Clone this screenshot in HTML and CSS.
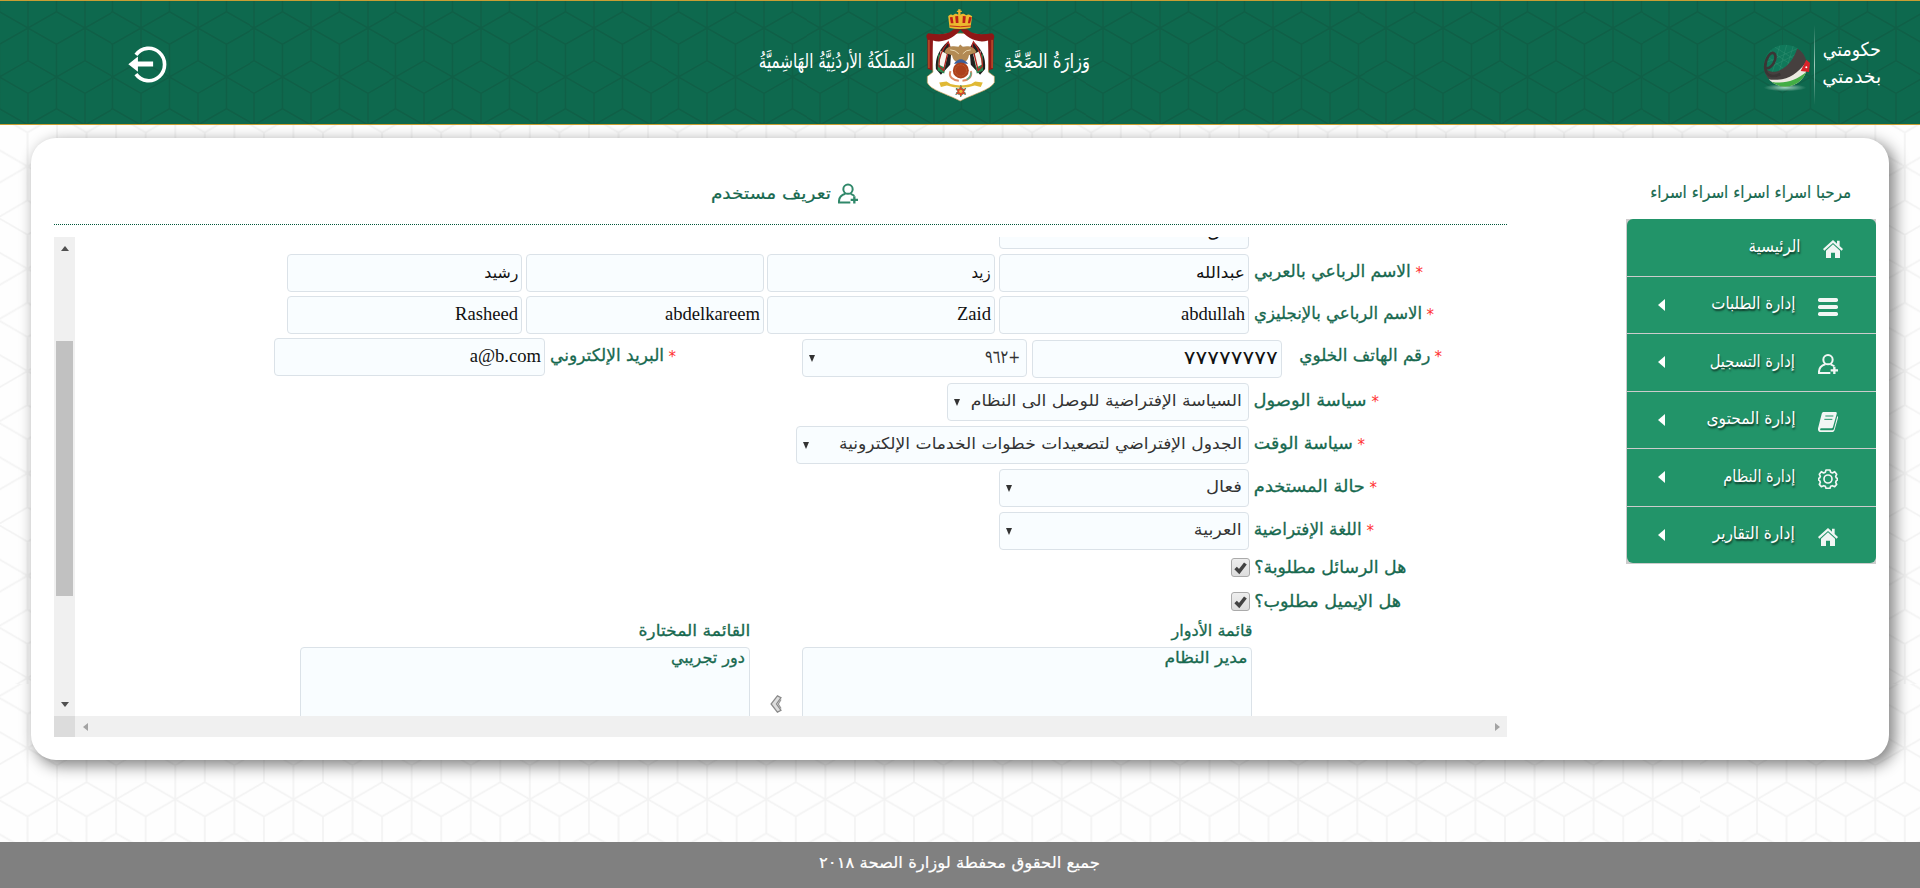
FILE: index.html
```html
<!DOCTYPE html>
<html lang="ar" dir="rtl">
<head>
<meta charset="utf-8">
<title>تعريف مستخدم</title>
<link rel="stylesheet" href="styles.css">
</head>
<body>
<svg class="defs" width="0" height="0">
  <symbol id="i-home" viewBox="0 0 60 54"><path fill="currentColor" d="M30 0 0 27l4 5L30 9l26 23 4-5-10-9V2h-8v9zM30 13 9 32v22h15V38h12v16h15V32z"/></symbol>
  <symbol id="i-menu" viewBox="0 0 60 54"><g fill="currentColor"><rect width="60" height="12" rx="5"/><rect y="21" width="60" height="12" rx="5"/><rect y="42" width="60" height="12" rx="5"/></g></symbol>
  <symbol id="i-user" viewBox="0 0 60 60"><g fill="none" stroke="currentColor" stroke-width="6"><ellipse cx="30" cy="17" rx="14" ry="14"/><path d="M22 31C8 35 2 42 3 57h34M38 31c5 2 9 4 11 6"/><path stroke-width="7" d="M38 49h22M49 38v22"/></g></symbol>
  <symbol id="i-book" viewBox="0 0 60 60"><path fill="currentColor" d="M18 0h34c4 0 5 2 4 6L45 45c-1 3-3 4-6 4H11c-6 0-6 6-1 6h31c4 0 6-1 7-5L58 12c4 3 2 6 1 9L50 53c-1 5-4 7-9 7H9c-8 0-11-7-8-14L11 6c1-4 3-6 7-6z"/><path stroke="#229469" stroke-width="3" d="M22 12h24M19 22h24"/></symbol>
  <symbol id="i-gear" viewBox="0 0 60 60"><g fill="none" stroke="currentColor"><circle cx="30" cy="30" r="12" stroke-width="5"/><path stroke-width="5" stroke-linejoin="round" d="M24 3h12l2 7 5 2 7-4 6 8-3 6 2 5 3 1v5l-3 2-2 5 3 6-6 7-7-3-5 2-2 6H24l-2-6-5-2-7 3-6-7 3-6-2-5-3-2v-5l3-1 2-5-3-6 6-8 7 4 5-2z"/></g></symbol>
</svg>

<header class="top">
  <div class="egov">
    <div class="egov-text">
      <span class="fit" data-w="58"><span>حكومتي</span></span>
      <span class="fit" data-w="59"><span>بخدمتي</span></span>
    </div>
    <i class="egov-line"></i>
    <svg class="ball" viewBox="70 130 147 147">
      <defs>
        <radialGradient id="sh"><stop offset="0" stop-color="#dfe" stop-opacity=".7"/><stop offset="1" stop-color="#dfe" stop-opacity="0"/></radialGradient>
        <clipPath id="bc"><ellipse cx="140" cy="198" rx="65" ry="63"/></clipPath>
      </defs>
      <ellipse cx="139" cy="264" rx="64" ry="11" fill="url(#sh)"/>
      <g clip-path="url(#bc)">
        <rect x="70" y="130" width="150" height="140" fill="#10785a"/>
        <g stroke="#3f9b7b" stroke-width="1" fill="none"><path d="M90 150l90 60M105 140l80 50M85 170l80 60M125 132l-25 90M145 132l-25 90M165 135l-25 85M80 190l100-45M90 205l100-50"/></g>
        <path d="M70 190C88 240 155 215 176 146l40 25v100H72z" fill="#46403f"/>
        <path d="M85 238c50 10 88-10 115-48l10 20v65H90z" fill="#eceae2"/>
        <path d="M97 246c40 8 75-2 110-32v60H97z" fill="#43ad45"/>
      </g>
      <path d="M186 214l17-34 11 10-3 27z" fill="#d8232a"/><circle cx="203" cy="203" r="3" fill="#fff"/>
      <path d="M80 205c20 5 36-28 28-42-10-14-30 15-28 42 3 32 32 25 45 18" fill="none" stroke="#3a3535" stroke-width="8"/>
    </svg>
  </div>
  <div class="brand">
    <span class="fit callig" data-w="86"><span>وَزارَةُ الصِّحَّةِ</span></span>
    <svg class="crest" viewBox="555 25 212 280">
      <path d="M572 108Q660 88 750 108L745 215 763 228V246C750 270 700 280 660 302 620 280 570 270 561 246V228L578 215z" fill="#fff" stroke="#c89b55" stroke-width="2"/>
      <path d="M640 86h42c15 18 45 16 74 12 8 5 8 12 5 17l-2 90-13 5-2-90c-35 10-66-10-83-33-17 23-50 43-83 33l-2 90-14-5-1-90c-5-8-2-14 3-17 30 4 61 6 76-12z" fill="#8f1716"/>
      <path d="M566 118v85M756 118v85" stroke="#cf6b35" stroke-width="3"/>
      <path d="M628 82l-4-35c5-6 10-7 14-3 5-6 12-6 16-2v-8h-4v-4h4v-4h7v4h4v4h-4v8c5-4 12-4 17 2 5-4 10-3 18 3l-5 35q-32 7-63 0z" fill="#edb82f"/>
      <path d="M632 68l-3-18 8-1 3 19zM647 67l-2-20 9-1 1 21zM667 67l1-21 9 1-2 20zM683 68l4-19 8 1-5 18z" fill="#be2016"/>
      <path d="M629 76q32 5 64 0" stroke="#c23017" stroke-width="3" fill="none"/>
      <path d="M622 124c-24 20-38 46-35 82l15 17 28-30 4-50zM700 124c25 20 38 46 35 82l-15 17-28-30-4-50z" fill="#20201f"/>
      <path d="M594 160l26 15-8 44-20-8zM728 160l-26 15 8 44 19-8z" fill="#2b8a51"/>
      <path d="M601 150l22 12-10 39-18-9zM721 150l-22 12 10 39 17-9z" fill="#f8f5ee"/>
      <path d="M624 124l4 10-18 76-14-13c-1-28 9-50 28-73zM700 124l-4 10 18 76 13-13c1-28-9-50-27-73z" fill="none" stroke="#b22521" stroke-width="4"/>
      <path d="M613 155c4-18 27-20 42-16l5-7 8 7c15-5 36 0 41 16-7 5-17 4-23 10-2 14-9 21-24 22-16-1-24-8-26-22-6-5-18-4-23-10z" fill="#b38a53"/>
      <path d="M630 148q16 0 26 12M692 148q-15 0-24 12" stroke="#ead7ae" stroke-width="3" fill="none"/>
      <path d="M631 212c-8 18 9 28 25 29M692 212c6 18-9 28-25 29" stroke="#df8b65" stroke-width="6" fill="none"/>
      <path d="M692 216c2 10-5 17-12 22" stroke="#62aa85" stroke-width="5" fill="none"/>
      <path d="M641 190q20-28 43 0z" fill="#3e5f99"/>
      <circle cx="662" cy="210" r="24" fill="#ad411b"/><circle cx="662" cy="210" r="17" fill="none" stroke="#cc7440" stroke-width="2" stroke-dasharray="3 2"/>
      <path d="M597 246l22-3 12 8q30 9 62 0l12-8 23 3-6 14-18-5q-41 14-84 0l-18 5z" fill="#e0b935"/>
      <path d="M662 255l5 10 11-1-6 9 6 9-11 0-5 8-5-8-11 0 6-9-6-9 11 1z" fill="#d24a2b" stroke="#369070" stroke-width="3" stroke-dasharray="4 5"/>
      <circle cx="662" cy="273" r="5" fill="#e9bd39"/>
    </svg>
    <span class="fit callig" data-w="156"><span>المَملَكَةُ الأردُنِيَّةُ الهَاشِميَّةُ</span></span>
  </div>
  <svg class="logout" viewBox="84 136 118 112"><path d="M108 163A48 49 0 1 1 108 221" fill="none" stroke="#fff" stroke-width="11"/><path d="M85 191l29-23v15h46v15h-46v16z" fill="#fff"/></svg>
</header>

<main class="card">
  <aside class="side">
    <div class="hello"><span class="fit" data-w="201"><span>مرحبا اسراء اسراء اسراء اسراء</span></span></div>
    <nav class="menu">
      <a class="home"><svg><use href="#i-home"/></svg><span class="fit" data-w="52"><span>الرئيسية</span></span></a>
      <a><svg><use href="#i-menu"/></svg><span class="fit" data-w="84"><span>إدارة الطلبات</span></span><i></i></a>
      <a><svg><use href="#i-user"/></svg><span class="fit" data-w="85"><span>إدارة التسجيل</span></span><i></i></a>
      <a><svg><use href="#i-book"/></svg><span class="fit" data-w="89"><span>إدارة المحتوى</span></span><i></i></a>
      <a><svg><use href="#i-gear"/></svg><span class="fit" data-w="72"><span>إدارة النظام</span></span><i></i></a>
      <a><svg><use href="#i-home"/></svg><span class="fit" data-w="82"><span>إدارة التقارير</span></span><i></i></a>
    </nav>
  </aside>
  <section class="content">
    <h1><svg><use href="#i-user"/></svg><span class="fit" data-w="120"><span>تعريف مستخدم</span></span></h1>
    <div class="scroller">
      <div class="form">
        <div class="row cut">
          <span class="box w250">ى</span>
        </div>
        <div class="row r-ar">
          <b>*</b><label class="fit" data-w="157"><span>الاسم الرباعي بالعربي</span></label>
          <span class="box w250"><span class="fit" data-w="49"><span>عبدالله</span></span></span>
          <span class="box w228"><span class="fit" data-w="19"><span>زيد</span></span></span>
          <span class="box w238"></span>
          <span class="box w235"><span class="fit" data-w="34"><span>رشيد</span></span></span>
        </div>
        <div class="row r-en">
          <b>*</b><label class="fit" data-w="168"><span>الاسم الرباعي بالإنجليزي</span></label>
          <span class="box w250">abdullah</span>
          <span class="box w228">Zaid</span>
          <span class="box w238">abdelkareem</span>
          <span class="box w235">Rasheed</span>
        </div>
        <div class="row r-phone">
          <b>*</b><label class="fit" data-w="131"><span>رقم الهاتف الخلوي</span></label>
          <span class="box w250 phone"><span class="fit" data-w="94"><span>٧٧٧٧٧٧٧٧</span></span></span>
          <span class="box pick code"><span class="fit" data-w="35"><span>+٩٦٢</span></span><i></i></span>
          <b class="mail">*</b><label class="fit" data-w="114"><span>البريد الإلكتروني</span></label>
          <span class="box w271">a@b.com</span>
        </div>
        <div class="row r-access">
          <b>*</b><label class="fit" data-w="113"><span>سياسة الوصول</span></label>
          <span class="box pick w302"><span class="fit" data-w="271"><span>السياسة الإفتراضية للوصل الى النظام</span></span><i></i></span>
        </div>
        <div class="row r-time">
          <b>*</b><label class="fit" data-w="99"><span>سياسة الوقت</span></label>
          <span class="box pick w453"><span class="fit" data-w="403"><span>الجدول الإفتراضي لتصعيدات خطوات الخدمات الإلكترونية</span></span><i></i></span>
        </div>
        <div class="row r-state">
          <b>*</b><label class="fit" data-w="111"><span>حالة المستخدم</span></label>
          <span class="box pick w250"><span class="fit" data-w="36"><span>فعال</span></span><i></i></span>
        </div>
        <div class="row r-lang">
          <b>*</b><label class="fit" data-w="108"><span>اللغة الإفتراضية</span></label>
          <span class="box pick w250"><span class="fit" data-w="48"><span>العربية</span></span><i></i></span>
        </div>
        <div class="row check r-sms">
          <label class="fit" data-w="152"><span>هل الرسائل مطلوبة؟</span></label>
          <span class="tick"><svg viewBox="0 0 19 19"><path d="M4 10l4 4 7-9" fill="none" stroke="#424242" stroke-width="3.900"/></svg></span>
        </div>
        <div class="row check r-email">
          <label class="fit" data-w="147"><span>هل الإيميل مطلوب؟</span></label>
          <span class="tick"><svg viewBox="0 0 19 19"><path d="M4 10l4 4 7-9" fill="none" stroke="#424242" stroke-width="3.900"/></svg></span>
        </div>
        <div class="lists">
          <div class="list"><label class="fit" data-w="81"><span>قائمة الأدوار</span></label><div class="options"><span class="fit" data-w="83"><span>مدير النظام</span></span></div></div>
          <svg class="move" viewBox="0 0 16 20"><path d="M9 1 2 10l7 9 4-2-5-7 5-7z" fill="#ddd" stroke="#8a8a8a" stroke-width="1.400"/><path d="M13 5l-3 5 3 5" fill="none" stroke="#999" stroke-width="1.500"/></svg>
          <div class="list"><label class="fit" data-w="112"><span>القائمة المختارة</span></label><div class="options"><span class="fit" data-w="74"><span>دور تجريبي</span></span></div></div>
        </div>
      </div>
      <div class="vbar"><i class="up"></i><span class="thumb"></span><i class="down"></i></div>
      <div class="hbar"><i class="right"></i><i class="left"></i></div>
      <div class="corner"></div>
    </div>
  </section>
</main>

<footer class="foot"><span class="fit" data-w="281"><span>جميع الحقوق محفطة لوزارة الصحة ٢٠١٨</span></span></footer>
<script src="fit.js"></script>
</body>
</html>
```
FILE: fit.js
```js
// Condenses or widens each phrase to its column width.
document.querySelectorAll('.fit').forEach(function (el) {
  var inner = el.firstElementChild;
  var w = Number(el.dataset.w);
  var natural = inner.getBoundingClientRect().width;
  el.style.width = w + 'px';
  inner.style.transform = 'scaleX(' + w / natural + ')';
});
```
FILE: styles.css
```css
* { box-sizing: border-box; }
body {
  margin: 0;
  height: 888px;
  overflow: hidden;
  display: flex;
  flex-direction: column;
  font-family: "DejaVu Sans", sans-serif;
  font-size: 17px;
  color: #17694f;
  background: #fefefe url("data:image/svg+xml,%3Csvg xmlns='http://www.w3.org/2000/svg' width='1700' height='684'%3E%3Cdefs%3E%3Cpattern id='q' x='27.5' y='64.15' width='59.1' height='102.3' patternUnits='userSpaceOnUse'%3E%3Cpath d='M0 0L29.55 17.05L59.1 0M0 0L29.55 -17.05L59.1 0M29.55 17.05V51.15M0 0V34.1M59.1 0V34.1M0 34.1L29.55 51.15L59.1 34.1M0 68.2L29.55 51.15L59.1 68.2M0 68.2V102.3M59.1 68.2V102.3M29.55 51.15V85.25M0 102.3L29.55 85.25L59.1 102.3' fill='none' stroke='%23f3f3f3' stroke-width='1.7'/%3E%3C/pattern%3E%3C/defs%3E%3Crect width='1700' height='684' fill='url(%23q)'/%3E%3C/svg%3E") 0 0 repeat;
}
.defs { position: absolute; }
.fit { display: inline-block; white-space: nowrap; flex: none; }
.fit > span { display: inline-block; transform-origin: 100% 50%; }

.top {
  height: 125px;
  flex: none;
  border: solid #c99e33;
  border-width: 1px 0;
  display: flex;
  align-items: flex-start;
  padding: 0 39px 0 128px;
  color: #fff;
  background: #0e694e url("data:image/svg+xml,%3Csvg xmlns='http://www.w3.org/2000/svg' width='56.6' height='97.3'%3E%3Cpath d='M0 0L28.3 -16.200L56.6 0M0 0L28.3 16.200L56.6 0M28.3 16.200V48.600M0 0V32.400M56.6 0V32.400M28.3 48.600L0 32.400M28.3 48.600L56.6 32.400M28.3 48.600L0 64.900M28.3 48.600L56.6 64.900M0 64.900V97.300M56.6 64.900V97.300M28.3 48.600V81.1M0 97.300L28.3 81.1L56.6 97.300' fill='none' stroke='%230f6047' stroke-width='1.6'/%3E%3C/svg%3E") 28.1px 27px;
}
.egov { display: flex; margin: 24px 0 0 672px; height: 82px; }
.egov-text { display: flex; flex-direction: column; padding-top: 11px; font-size: 19px; line-height: 27px; }
.egov-line { width: 1px; height: 80px; margin: 0 7px 0 3px; background: linear-gradient(transparent, #9fc9ba 50%, transparent); }
.ball { width: 49px; height: 49px; margin-top: 18px; }
.brand { display: flex; align-items: flex-start; margin-left: auto; }
.crest { width: 71px; height: 93px; margin: 8px 8px 0 10px; }
.callig { font-size: 20px; line-height: 30px; margin-top: 45px; }
.logout { width: 39px; height: 37px; margin-top: 45px; }

.card {
  flex: none;
  height: 622px;
  margin: 13px 31px 0;
  border-radius: 25px;
  background: #fff;
  box-shadow: 5px 5px 15px 1px rgba(0,0,0,.48);
  display: flex;
  justify-content: space-between;
  padding: 0 13px 0 23px;
}
.side { width: 250px; }
.hello { padding: 41px 25px 0 0; height: 81px; line-height: 26px; -webkit-text-stroke: .2px; }
.menu { border: 1px solid #ccc; background: #ccc; height: 345px; display: grid; grid-template-rows: repeat(6, 1fr); row-gap: 1px; border-right-width: 0; border-top: 0; }
.menu a { background: #229469; color: #fff; display: flex; align-items: center; padding-right: 38px; font-size: 17px; text-shadow: 1px 2px 2px rgba(0,0,0,.6); }
.menu a:first-child { border-radius: 6px 6px 0 0; }
.menu a:last-child { border-radius: 0 0 6px 6px; }
.menu a.home { padding-right: 33px; }
.menu svg { width: 20px; height: 20px; margin: 4px 0 0 23px; color: #f2f6f4; }
.menu a.home svg { margin-left: 22px; }
.menu .fit { margin-bottom: 3px; }
.menu i { margin-right: auto; margin-left: 31px; border: solid transparent; border-width: 6px 0; border-right: 7px solid #fff; }

.content { width: 1453px; }
h1 { margin: 0; height: 87px; border-bottom: 1px dotted #00573a; padding: 42px 649px 0 0; display: flex; align-items: flex-start; font-size: 17px; font-weight: normal; line-height: 26px; -webkit-text-stroke: .2px; }
h1 svg { width: 20px; height: 21px; margin: 3px 0 0 7px; color: #30886a; }
.scroller { margin-top: 12px; display: grid; grid-template-columns: 1432px 21px; grid-template-rows: 479px 21px; }
.form { overflow: hidden; height: 479px; }
.row { display: flex; height: 38px; margin-bottom: 4px; }
.row b { color: #f33; font: 15px/38px "DejaVu Sans", sans-serif; width: 8px; margin-left: 4px; }
.row label { margin-left: 5px; line-height: 34px; -webkit-text-stroke: .3px; }
.box {
  flex: none;
  height: 38px;
  border: 1px solid #dbe2e8;
  border-radius: 4px;
  background: #f9fdff;
  color: #111;
  padding: 0 3px 0 4px;
  font: 18.600px/34px "Liberation Serif", "DejaVu Sans", serif;
}
.box .fit { font: 16px/32px "DejaVu Sans", sans-serif; }
.box.phone .fit { font-size: 19px; }
.box.code .fit { font-size: 18px; }
.w250 { width: 250px; } .w228 { width: 228px; } .w238 { width: 238px; } .w235 { width: 235px; }
.w271 { width: 271px; } .w302 { width: 302px; } .w453 { width: 453px; }
.box + .box { margin-right: 4px; }
.w228 + .w238 { margin-right: 3px; }
.pick { display: flex; align-items: center; padding: 0 6px; color: #333; }
.pick .fit { margin-bottom: 2px; }
.pick i { margin-right: auto; border: solid transparent; border-width: 0 3.500px; border-top: 7px solid #333; }
.cut { height: 12px; margin-bottom: 5px; padding-right: 258px; align-items: flex-end; }
.cut .box { line-height: 1px; padding: 20px 28px 0 0; font-family: "DejaVu Sans", sans-serif; font-size: 16px; }
.r-ar { padding-right: 84px; }
.r-en { padding-right: 73px; margin-bottom: 4px; }
.r-phone { padding-right: 65px; height: 40px; margin-bottom: 5px; }
.phone { margin: 2px 12px 0 0; }
.code { width: 225px; margin-top: 1px; }
.box.code { margin-right: 5px; }
.mail { margin-right: 126px; }
.r-access { padding-right: 128px; margin-bottom: 5px; }
.r-time { padding-right: 142px; margin-bottom: 5px; }
.r-state { padding-right: 130px; margin-bottom: 5px; }
.r-lang { padding-right: 133px; margin-bottom: 8px; }
.check { height: 19px; margin-bottom: 15px; }
.row.check label { line-height: 19px; margin-left: 4px; }
.r-sms { padding-right: 101px; }
.r-email { padding-right: 106px; margin-bottom: 9px; }
.tick { width: 19px; height: 19px; border: 1px solid #aaa; border-radius: 3px; background: linear-gradient(#eee, #ddd); }
.tick svg { display: block; width: 17px; height: 17px; }
.lists { display: flex; padding-right: 255px; }
.list { width: 450px; -webkit-text-stroke: .3px; font-size: 16px; }
.list label { display: block; line-height: 22px; height: 27px; }
.options { height: 120px; border: 1px solid #dbe2e8; border-radius: 4px; background: #f9fdff; padding: 0 4px; line-height: 20px; }
.move { width: 15px; height: 18px; margin: 75px 18px 0 19px; }
.vbar { background: #f0f0f0; display: flex; flex-direction: column; align-items: center; padding: 9px 0 9px; }
.vbar i { border: solid transparent; border-width: 0 4.500px; }
.up { border-bottom: 5px solid #505050 !important; }
.down { border-top: 5px solid #505050 !important; margin-top: auto; }
.thumb { width: 17px; height: 255px; background: #c1c1c1; margin-top: 90px; }
.hbar { background: #f0f0f0; display: flex; justify-content: space-between; align-items: center; padding: 0 7px 0 8px; }
.hbar i { border: solid transparent; border-width: 4.500px 0; }
.right { border-left: 5px solid #a3a3a3 !important; }
.left { border-right: 5px solid #a3a3a3 !important; }
.corner { background: #dcdcdc; }

.foot { margin-top: auto; height: 46px; flex: none; background: #808080; color: #fff; text-align: center; line-height: 41px; font-size: 16px; padding-left: 6px; -webkit-text-stroke: .2px; }
```
